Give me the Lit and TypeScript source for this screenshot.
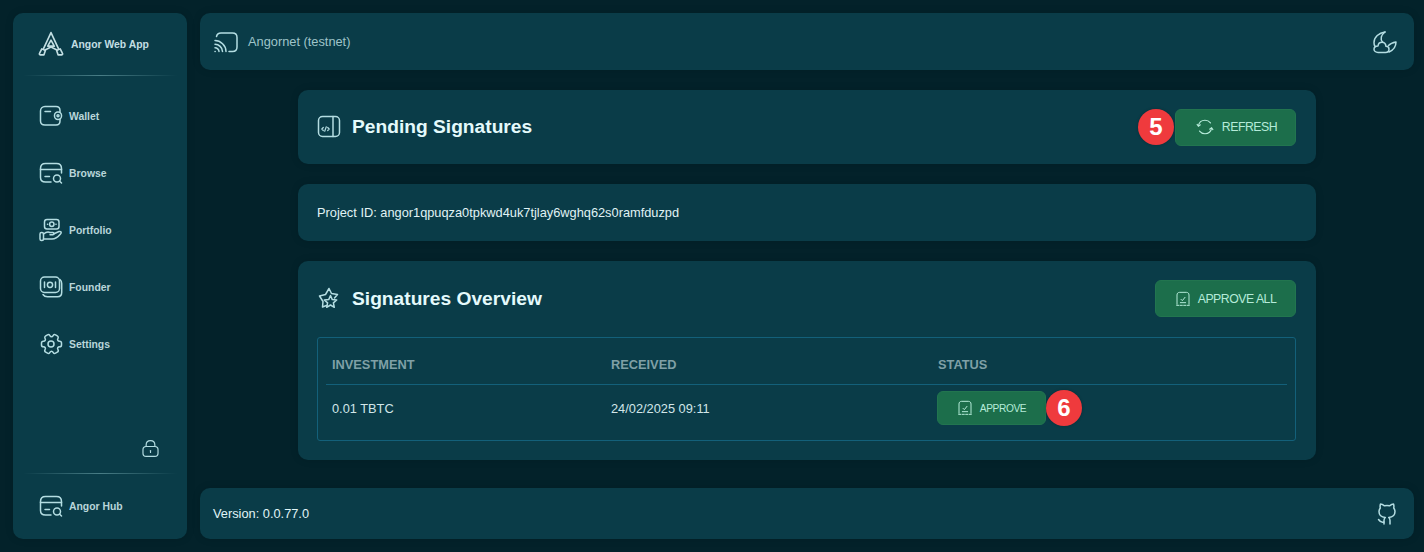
import { LitElement, html, css, svg } from "lit";
import { customElement } from "lit/decorators.js";

const ic = (body: unknown, size = 24) =>
  html`<svg width=${size} height=${size} viewBox="0 0 24 24" fill="none" stroke="currentColor" stroke-width="1.5" stroke-linecap="round" stroke-linejoin="round">${body}</svg>`;

const logo = svg`<path d="M12 1.500L5 16.500M12 1.500L19 16.500"/><path d="M12 8.500L15 14H9Z"/><path d="M6.500 17.500L12 14.800L17.500 17.500"/><path d="M3.500 16.500L6.800 18L5.500 22H2C1.300 22 1 21.300 1.500 20.500Z"/><path d="M20.500 16.500L17.200 18L18.500 22H22C22.700 22 23 21.300 22.500 20.500Z"/>`;
const wallet = svg`<path d="M21 8V6.500C21 4 19.500 2.500 17 2.500H6C3.500 2.500 1.500 4.500 1.500 7V17C1.500 19.500 3.500 21 6 21H17C19.500 21 21 19.500 21 17V15.500"/><rect x="15.500" y="8" width="7" height="7.500" rx="3.400"/><circle cx="19" cy="11.800" r="1"/><path d="M6 7.500H11.500"/>`;
const browse = svg`<path d="M22.500 12V7.500C22.500 4.500 20.500 2.500 17.500 2.500H6.500C3.500 2.500 1.500 4.500 1.500 7.500V16.500C1.500 19.500 3.500 21 6.500 21H12"/><path d="M1.500 8.500H22.500"/><path d="M6 15.500H10.500"/><circle cx="18" cy="17.500" r="3.500"/><path d="M20.700 20.200L22.500 22"/>`;
const portfolio = svg`<rect x="5.500" y="1.500" width="14.500" height="9.500" rx="2.500"/><circle cx="12.800" cy="6.200" r="2.200"/><path d="M8.500 6.200H8.700M16.900 6.200H17.100"/><rect x="1" y="14.500" width="3.500" height="8" rx="1.500"/><path d="M4.500 16C7 14 9 13.500 11 14.500H14C15.200 14.500 15.500 16.500 14 16.700H11"/><path d="M14.500 16L20 13.500C22 13 23 14.500 21.500 16C19 19 16 21 13 21H4.500"/>`;
const founder = svg`<rect x="1.500" y="2" width="19" height="15.500" rx="4"/><circle cx="11" cy="9.800" r="2.600"/><path d="M5.500 7V12.500M16.500 7V12.500"/><path d="M4 19.500C5 21 6.500 21.700 8.500 21.700H18.500C21 21.700 22.700 20 22.700 17.500V8.500C22.700 7 22.200 5.500 21 4.500"/>`;
const gear = svg`<circle cx="12" cy="12" r="3"/><path d="M1 12.880v-1.760c0-1.040.85-1.900 1.900-1.900 1.810 0 2.550-1.280 1.640-2.850-.52-.9-.21-2.070.7-2.590l1.730-.99c.79-.47 1.810-.19 2.280.6l.11.19c.9 1.570 2.380 1.570 3.290 0l.11-.19c.47-.79 1.490-1.070 2.280-.6l1.730.99c.91.52 1.220 1.690.7 2.590-.91 1.570-.17 2.850 1.640 2.850 1.040 0 1.900.85 1.900 1.900v1.760c0 1.040-.85 1.900-1.900 1.900-1.810 0-2.550 1.280-1.640 2.850.52.910.21 2.070-.7 2.590l-1.730.99c-.79.47-1.810.19-2.280-.6l-.11-.19c-.9-1.570-2.380-1.570-3.290 0l-.11.19c-.47.79-1.490 1.070-2.280.6l-1.730-.99a1.899 1.899 0 0 1-.7-2.590c.91-1.570.17-2.850-1.640-2.850-1.050 0-1.900-.86-1.900-1.900Z" transform="translate(1.500 0)" />`;
const lock = svg`<rect x="2.500" y="9.500" width="19" height="12.500" rx="4"/><path d="M6.500 9.500V7.500C6.500 4 8.500 2 12 2C15.500 2 17.500 4 17.500 7.500V9.500"/><path d="M12 14.500V17"/>`;
const cast = svg`<path d="M2.500 6.500C3 4 4.500 3 7 3H18.500C21.200 3 23 4.800 23 7.500V17C23 19.700 21.200 21.500 18.500 21.500H15"/><path d="M1 10.500C6.500 10.500 12 15.500 12 21.500"/><path d="M1 14.200C4.800 14.200 8.500 17.500 8.500 21.500"/><path d="M1 17.800C3 17.800 5 19.500 5 21.500"/><path d="M1 21.500H1.200"/>`;
const moon = svg`<path d="M12 2C6 3 1 7 1 12.500C1 14 1.200 15 1.800 16"/><path d="M12 2C8 5 7 9 9.500 12"/><path d="M5 22.500H12.500C14.500 22.500 16 21 16 19.300C16 17.600 14.700 16.300 13 16.300C12.700 14 11 12.300 9 12.300C6.800 12.300 5.200 14 5 16C2.800 16 1 17.300 1 19.300C1 21 2.800 22.500 5 22.500Z"/><path d="M15.500 15.500C17 13.800 20 12.500 23 12C23 16 20.500 20 16 22"/>`;
const panel = svg`<rect x="1.500" y="1.500" width="21" height="20" rx="4"/><path d="M16 1.500V21.500"/><path d="M6.300 15.500L4.800 14L6.300 12.500M10.700 12.500L12.200 14L10.700 15.500M9.300 11.800L7.700 16.200" stroke-width="1.200"/>`;
const refresh = svg`<path d="M3.200 10.500C4 6 7.600 3 12 3C15 3 17.600 4.400 19.300 6.600"/><path d="M20.800 13.500C20 18 16.400 21 12 21C9 21 6.400 19.600 4.700 17.400"/><path d="M1.500 8.500L3.200 11L5.800 9.200M22.500 15.500L20.800 13L18.200 14.800"/>`;
const stars = svg`<path d="M9.500 18.500L5.500 20L6 14.500L2.500 9L8.500 7.500L12 1.500L14.500 6.500L20.500 7.500L17.500 11"/><path d="M13.500 8.500L15.300 12.600L19.700 13L16.400 15.900L17.300 20.300L13.500 18L9.700 20.300L10.600 15.900L7.300 13L11.700 12.600Z"/>`;
const receipt = svg`<path d="M3 20V6C3 3.500 4.500 2 7 2H17C19.500 2 21 3.500 21 6V20"/><path d="M2.500 21.500H5.500M7.500 21.500H11M13 21.500H16.500M18.500 21.500H21.500"/><path d="M9 12.500L11 14.500L15 9.500"/><path d="M8 17.500H16"/>`;
const github = svg`<path d="M9 22V18.500C9 17 9.500 16.200 10.300 15.500C7 15.200 4 13.500 4 9.500C4 8.200 4.500 7 5.300 6C5 5 5 3.500 5.500 2C7 2 8.500 3 9.500 3.800C11 3.400 13 3.400 14.500 3.800C15.500 3 17 2 18.500 2C19 3.500 19 5 18.700 6C19.500 7 20 8.200 20 9.500C20 13.500 17 15.200 13.700 15.500C14.500 16.200 15 17 15 18.500V22"/><path d="M9 20C6 21 4.500 19 3.500 17.500"/>`;

const nav: [string, unknown][] = [
  ["Wallet", wallet],
  ["Browse", browse],
  ["Portfolio", portfolio],
  ["Founder", founder],
  ["Settings", gear],
];

@customElement("app-root")
export class AppRoot extends LitElement {
  static styles = css`
    :host {
      display: block;
      width: 1424px;
      height: 552px;
      overflow: hidden;
      background: #03222a;
      color: #d9f3f5;
      font-family: "Liberation Sans", Arial, sans-serif;
    }
    svg { display: block; flex: none; }
    .page {
      box-sizing: border-box;
      height: 552px;
      padding: 13px 10px 13px 13px;
      display: grid;
      grid-template-columns: 174px 1fr;
      column-gap: 13px;
    }
    .panel {
      background: #0a3c48;
      border-radius: 10px;
      box-shadow: 0 0 8px rgba(0, 0, 0, 0.12);
    }
    .side {
      display: flex;
      flex-direction: column;
      padding: 0 10px;
      color: #b4dde2;
    }
    .brand {
      height: 62px;
      display: flex;
      align-items: center;
      gap: 7px;
      padding-left: 15px;
      font-size: 10.4px;
      font-weight: 700;
      color: #c3dfe3;
    }
    .rule {
      height: 1px;
      flex: none;
      background: linear-gradient(90deg, transparent, rgba(150, 205, 210, 0.45), transparent);
    }
    .nav {
      display: flex;
      flex-direction: column;
      gap: 33px;
      padding: 28px 0 0 16px;
    }
    .item {
      height: 24px;
      display: flex;
      align-items: center;
      gap: 6px;
      font-size: 10.4px;
      font-weight: 700;
      color: #b9d6da;
    }
    .item svg { color: #b4dde2; }
    .lockrow {
      margin-top: auto;
      display: flex;
      justify-content: flex-end;
      padding: 0 17px 15px 0;
    }
    .hub { padding: 20px 0 21px 16px; }
    .main {
      display: flex;
      flex-direction: column;
      min-width: 0;
    }
    .top {
      height: 57px;
      flex: none;
      display: flex;
      align-items: center;
      justify-content: space-between;
      padding: 0 17px 0 14px;
    }
    .top svg { color: #b4dde2; }
    .net {
      display: flex;
      align-items: center;
      gap: 10px;
      font-size: 12.8px;
      color: #9fc4c9;
    }
    .content {
      width: 1018px;
      margin: 20px 0 0 98px;
      display: flex;
      flex-direction: column;
      gap: 20px;
    }
    .head {
      height: 74px;
      box-sizing: border-box;
      display: flex;
      align-items: center;
      justify-content: space-between;
      padding: 0 20px 0 19px;
    }
    .title {
      display: flex;
      align-items: center;
      gap: 11px;
      margin: 0;
      font-size: 19.2px;
      font-weight: 700;
      color: #e4fafc;
    }
    .title svg { color: #b4dde2; }
    .project {
      height: 57px;
      display: flex;
      align-items: center;
      padding-left: 19px;
      font-size: 12.8px;
      color: #e0f3f5;
    }
    .btn {
      position: relative;
      box-sizing: border-box;
      height: 37px;
      display: flex;
      align-items: center;
      justify-content: center;
      gap: 7px;
      border: 1px solid #22754f;
      border-radius: 6px;
      background: #1c6e4b;
      color: #b5ebd9;
      font-size: 12.3px;
      letter-spacing: -0.5px;
    }
    .refresh { width: 121px; gap: 8px; padding-left: 2px; }
    .all { width: 141px; }
    .approve {
      width: 109px;
      height: 34px;
      margin-left: -1px;
      font-size: 10.2px;
      letter-spacing: -0.4px;
    }
    .badge {
      position: absolute;
      width: 36px;
      height: 36px;
      border-radius: 50%;
      top: 50%;
      transform: translateY(-50%);
      background: #ef3a3d;
      color: #fff;
      font-size: 24px;
      font-weight: 700;
      letter-spacing: 0;
      display: flex;
      align-items: center;
      justify-content: center;
      box-shadow: 0 0 3px rgba(0, 0, 0, 0.25);
    }
    .refresh .badge { left: -38px; }
    .approve .badge { right: -37px; }
    .overview { padding: 19px 20px 19px 19px; height: 199px; box-sizing: border-box; }
    .ohead {
      height: 37px;
      display: flex;
      align-items: center;
      justify-content: space-between;
    }
    .tbl {
      box-sizing: border-box;
      margin-top: 20px;
      height: 104px;
      border: 1px solid #13607a;
      border-radius: 3px;
      padding: 0 8px;
    }
    .row {
      display: grid;
      grid-template-columns: 279px 327px 1fr;
      padding-left: 6px;
      align-items: center;
      font-size: 12.8px;
      color: #d2e6e8;
    }
    .thead {
      height: 47px;
      box-sizing: border-box;
      padding-top: 6px;
      border-bottom: 1px solid #13607a;
      font-weight: 700;
      color: #7fa0a6;
    }
    .tbody { height: 46px; }
    .foot {
      height: 51px;
      flex: none;
      margin-top: auto;
      display: flex;
      align-items: center;
      justify-content: space-between;
      padding: 0 15px 0 13px;
      font-size: 12.8px;
      color: #e0f5f7;
    }
    .foot svg { color: #b4dde2; }
  `;

  render() {
    return html`<div class="page">
      <aside class="panel side">
        <div class="brand">${ic(logo, 26)}<span>Angor Web App</span></div>
        <div class="rule"></div>
        <nav class="nav">
          ${nav.map(([t, i]) => html`<div class="item">${ic(i)}<span>${t}</span></div>`)}
        </nav>
        <div class="lockrow">${ic(lock, 19)}</div>
        <div class="rule"></div>
        <div class="item hub">${ic(browse)}<span>Angor Hub</span></div>
      </aside>
      <div class="main">
        <header class="panel top">
          <div class="net">${ic(cast)}<span>Angornet (testnet)</span></div>
          ${ic(moon)}
        </header>
        <div class="content">
          <section class="panel head">
            <h2 class="title">${ic(panel)}<span>Pending Signatures</span></h2>
            <div class="btn refresh">
              <span class="badge">5</span>${ic(refresh, 18)}<span>REFRESH</span>
            </div>
          </section>
          <section class="panel project">Project ID: angor1qpuqza0tpkwd4uk7tjlay6wghq62s0ramfduzpd</section>
          <section class="panel overview">
            <div class="ohead">
              <h2 class="title">${ic(stars)}<span>Signatures Overview</span></h2>
              <div class="btn all">${ic(receipt, 16)}<span>APPROVE ALL</span></div>
            </div>
            <div class="tbl">
              <div class="row thead"><span>INVESTMENT</span><span>RECEIVED</span><span>STATUS</span></div>
              <div class="row tbody">
                <span>0.01 TBTC</span><span>24/02/2025 09:11</span>
                <div class="btn approve">${ic(receipt, 16)}<span>APPROVE</span><span class="badge">6</span></div>
              </div>
            </div>
          </section>
        </div>
        <footer class="panel foot"><span>Version: 0.0.77.0</span>${ic(github)}</footer>
      </div>
    </div>`;
  }
}
